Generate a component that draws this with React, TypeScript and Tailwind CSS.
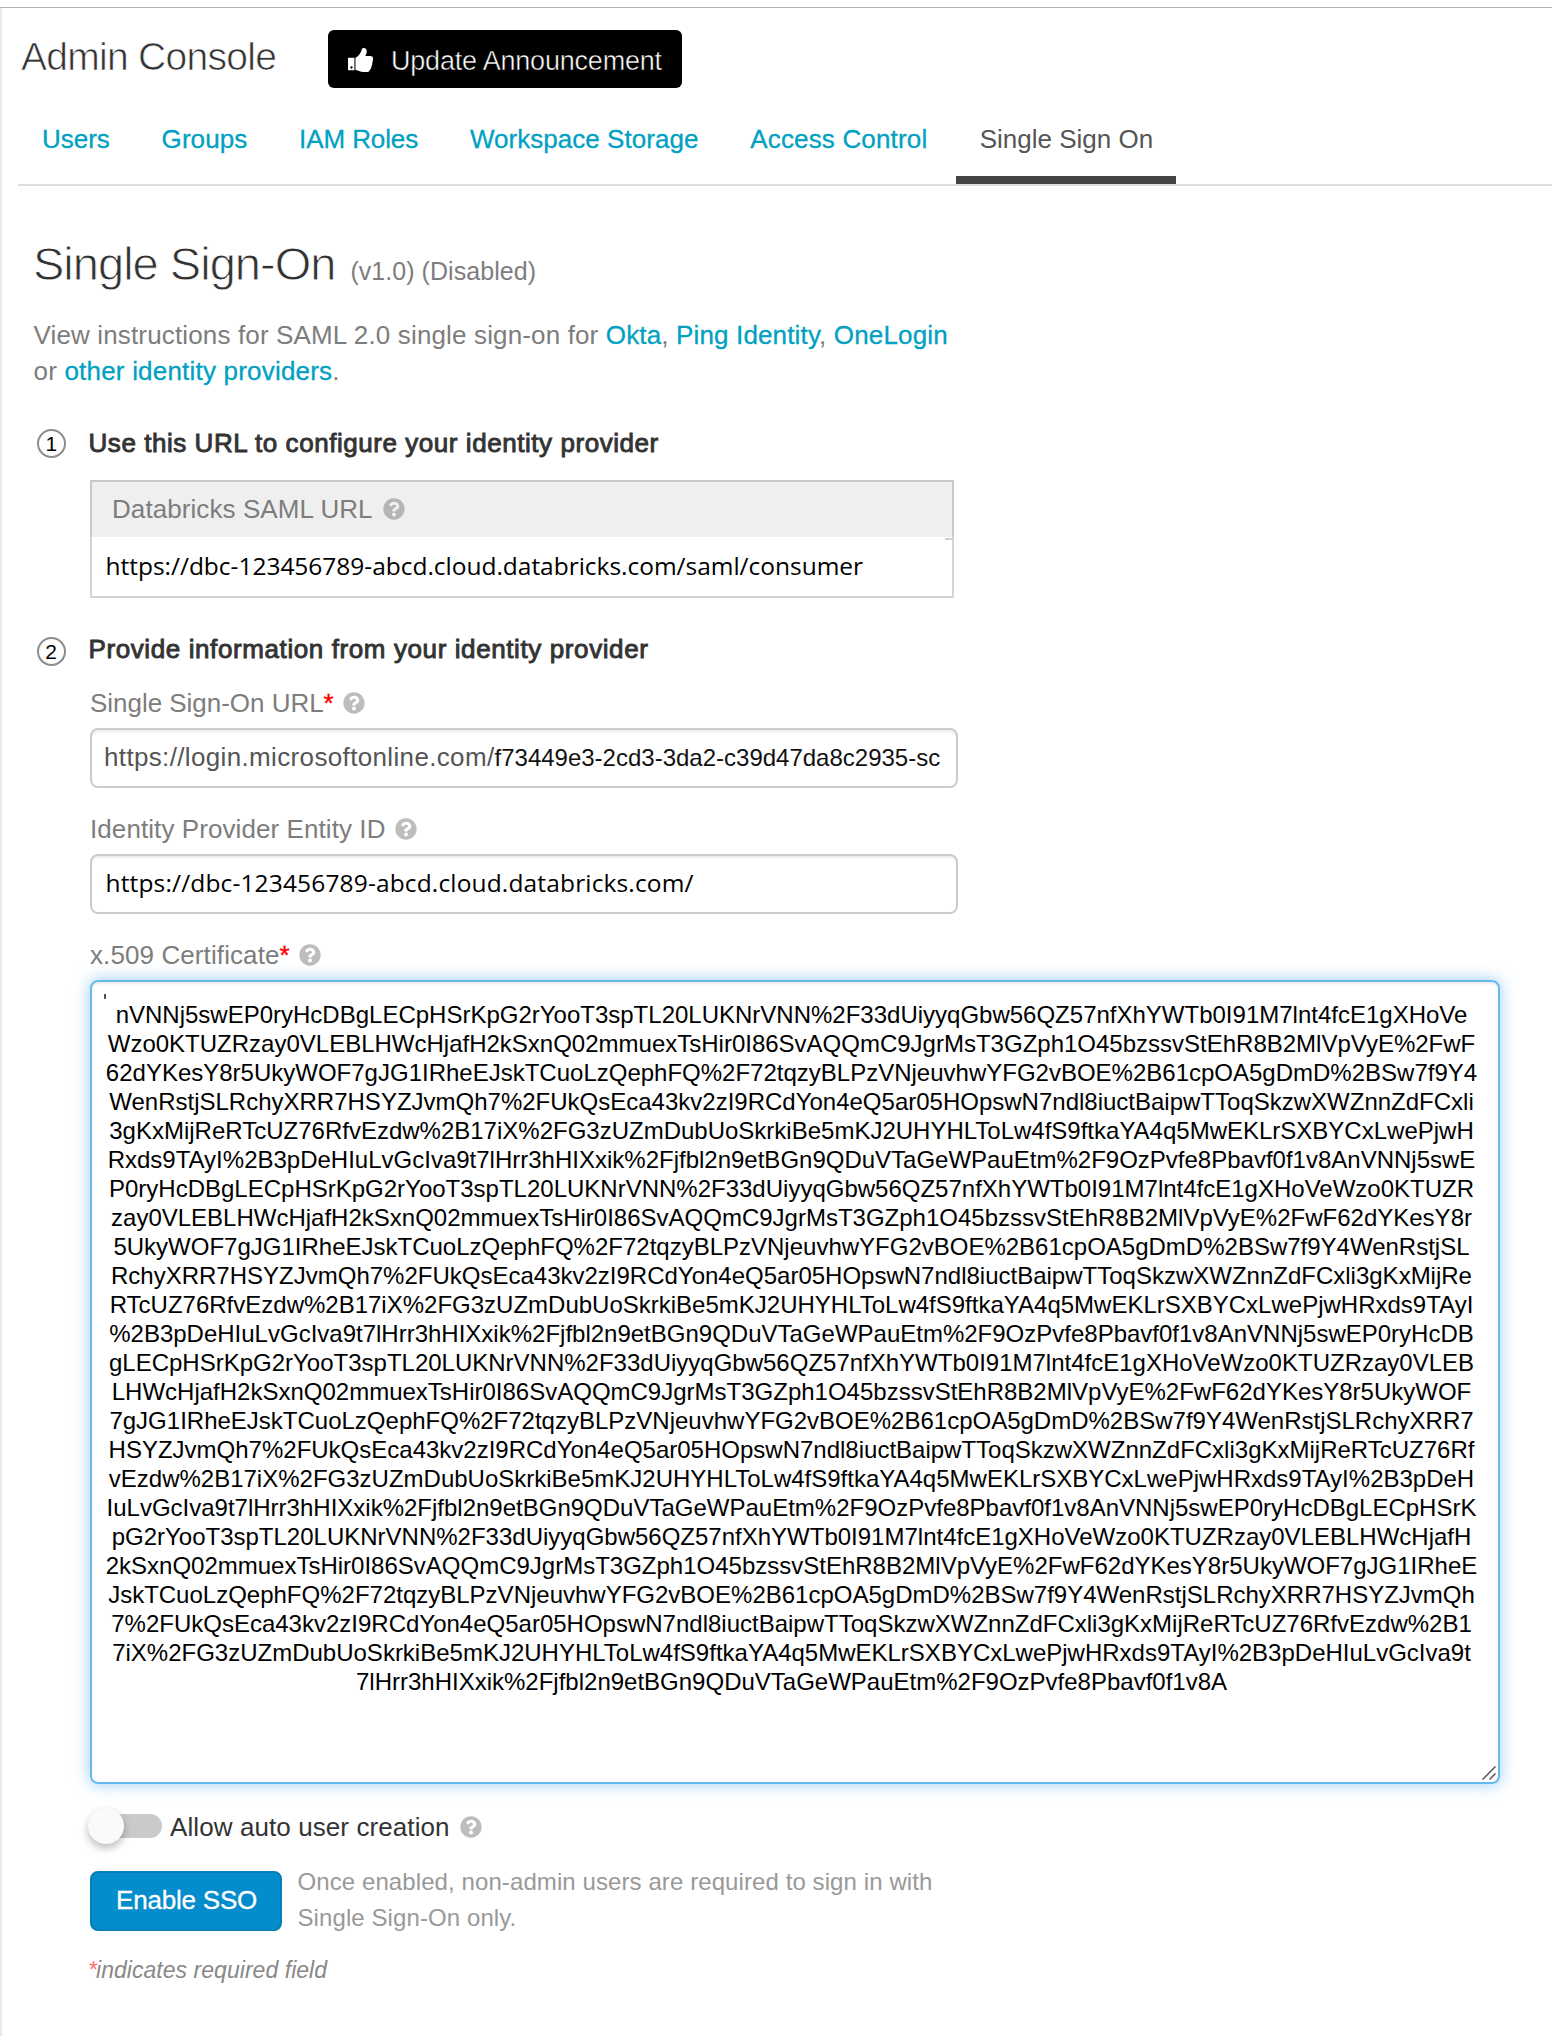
import React from 'react';
import { FaQuestionCircle } from 'react-icons/fa';

const CERTIFICATE_LINES = [
  'nVNNj5swEP0ryHcDBgLECpHSrKpG2rYooT3spTL20LUKNrVNN%2F33dUiyyqGbw56QZ57nfXhYWTb0I91M7lnt4fcE1gXHoVe',
  'Wzo0KTUZRzay0VLEBLHWcHjafH2kSxnQ02mmuexTsHir0I86SvAQQmC9JgrMsT3GZph1O45bzssvStEhR8B2MlVpVyE%2FwF',
  '62dYKesY8r5UkyWOF7gJG1IRheEJskTCuoLzQephFQ%2F72tqzyBLPzVNjeuvhwYFG2vBOE%2B61cpOA5gDmD%2BSw7f9Y4',
  'WenRstjSLRchyXRR7HSYZJvmQh7%2FUkQsEca43kv2zI9RCdYon4eQ5ar05HOpswN7ndl8iuctBaipwTToqSkzwXWZnnZdFCxli',
  '3gKxMijReRTcUZ76RfvEzdw%2B17iX%2FG3zUZmDubUoSkrkiBe5mKJ2UHYHLToLw4fS9ftkaYA4q5MwEKLrSXBYCxLwePjwH',
  'Rxds9TAyI%2B3pDeHIuLvGcIva9t7lHrr3hHIXxik%2Fjfbl2n9etBGn9QDuVTaGeWPauEtm%2F9OzPvfe8Pbavf0f1v8AnVNNj5swE',
  'P0ryHcDBgLECpHSrKpG2rYooT3spTL20LUKNrVNN%2F33dUiyyqGbw56QZ57nfXhYWTb0I91M7lnt4fcE1gXHoVeWzo0KTUZR',
  'zay0VLEBLHWcHjafH2kSxnQ02mmuexTsHir0I86SvAQQmC9JgrMsT3GZph1O45bzssvStEhR8B2MlVpVyE%2FwF62dYKesY8r',
  '5UkyWOF7gJG1IRheEJskTCuoLzQephFQ%2F72tqzyBLPzVNjeuvhwYFG2vBOE%2B61cpOA5gDmD%2BSw7f9Y4WenRstjSL',
  'RchyXRR7HSYZJvmQh7%2FUkQsEca43kv2zI9RCdYon4eQ5ar05HOpswN7ndl8iuctBaipwTToqSkzwXWZnnZdFCxli3gKxMijRe',
  'RTcUZ76RfvEzdw%2B17iX%2FG3zUZmDubUoSkrkiBe5mKJ2UHYHLToLw4fS9ftkaYA4q5MwEKLrSXBYCxLwePjwHRxds9TAyI',
  '%2B3pDeHIuLvGcIva9t7lHrr3hHIXxik%2Fjfbl2n9etBGn9QDuVTaGeWPauEtm%2F9OzPvfe8Pbavf0f1v8AnVNNj5swEP0ryHcDB',
  'gLECpHSrKpG2rYooT3spTL20LUKNrVNN%2F33dUiyyqGbw56QZ57nfXhYWTb0I91M7lnt4fcE1gXHoVeWzo0KTUZRzay0VLEB',
  'LHWcHjafH2kSxnQ02mmuexTsHir0I86SvAQQmC9JgrMsT3GZph1O45bzssvStEhR8B2MlVpVyE%2FwF62dYKesY8r5UkyWOF',
  '7gJG1IRheEJskTCuoLzQephFQ%2F72tqzyBLPzVNjeuvhwYFG2vBOE%2B61cpOA5gDmD%2BSw7f9Y4WenRstjSLRchyXRR7',
  'HSYZJvmQh7%2FUkQsEca43kv2zI9RCdYon4eQ5ar05HOpswN7ndl8iuctBaipwTToqSkzwXWZnnZdFCxli3gKxMijReRTcUZ76Rf',
  'vEzdw%2B17iX%2FG3zUZmDubUoSkrkiBe5mKJ2UHYHLToLw4fS9ftkaYA4q5MwEKLrSXBYCxLwePjwHRxds9TAyI%2B3pDeH',
  'IuLvGcIva9t7lHrr3hHIXxik%2Fjfbl2n9etBGn9QDuVTaGeWPauEtm%2F9OzPvfe8Pbavf0f1v8AnVNNj5swEP0ryHcDBgLECpHSrK',
  'pG2rYooT3spTL20LUKNrVNN%2F33dUiyyqGbw56QZ57nfXhYWTb0I91M7lnt4fcE1gXHoVeWzo0KTUZRzay0VLEBLHWcHjafH',
  '2kSxnQ02mmuexTsHir0I86SvAQQmC9JgrMsT3GZph1O45bzssvStEhR8B2MlVpVyE%2FwF62dYKesY8r5UkyWOF7gJG1IRheE',
  'JskTCuoLzQephFQ%2F72tqzyBLPzVNjeuvhwYFG2vBOE%2B61cpOA5gDmD%2BSw7f9Y4WenRstjSLRchyXRR7HSYZJvmQh',
  '7%2FUkQsEca43kv2zI9RCdYon4eQ5ar05HOpswN7ndl8iuctBaipwTToqSkzwXWZnnZdFCxli3gKxMijReRTcUZ76RfvEzdw%2B1',
  '7iX%2FG3zUZmDubUoSkrkiBe5mKJ2UHYHLToLw4fS9ftkaYA4q5MwEKLrSXBYCxLwePjwHRxds9TAyI%2B3pDeHIuLvGcIva9t',
  '7lHrr3hHIXxik%2Fjfbl2n9etBGn9QDuVTaGeWPauEtm%2F9OzPvfe8Pbavf0f1v8A',
];

const TABS = [
  { label: 'Users' },
  { label: 'Groups', spacing: 'tracking-[0.08px]' },
  { label: 'IAM Roles', spacing: 'tracking-[-0.1px]' },
  { label: 'Workspace Storage', spacing: 'tracking-[0.04px]' },
  { label: 'Access Control', spacing: 'tracking-[0.16px]' },
  { label: 'Single Sign On', active: true },
];

function ThumbsUp() {
  return (
    <svg className="mt-[18px] h-6 w-[25px] shrink-0" viewBox="0 0 75 72">
      <path
        d="M2 29H19V67H2C1 67 0 66 0 65V31C0 30 1 29 2 29ZM10.5 55A3.5 3.5 0 1 0 10.5 62 3.5 3.5 0 1 0 10.5 55Z"
        fill="#fff"
        fillRule="evenodd"
      />
      <path d="M19 29H23V66H19Z" fill="#777" />
      <path
        d="M23 29C30 26 37 17 40 9C41 4 42 0 47 0C54 0 57 5 56 12C56 16 54 20 52 24H67C73 24 76 28 75 33C74 38 74 42 73 46C73 50 72 53 70 56C70 60 68 63 66 65C64 71 60 72 54 72H46C38 72 32 68 23 66Z"
        fill="#fff"
      />
    </svg>
  );
}

function Help({ className = '' }: { className?: string }) {
  return <FaQuestionCircle className={`size-[22px] shrink-0 text-[#bdbdbd] ${className}`} />;
}

function Link({ children }: { children: React.ReactNode }) {
  return (
    <a className="text-[#00a1c2] [-webkit-text-stroke:0.3px_#00a1c2]" href="#">
      {children}
    </a>
  );
}

function Step({ n, title, leading }: { n: number; title: string; leading: string }) {
  return (
    <div className="ml-[5px] flex h-[29px] items-start gap-[22.5px]">
      <span className="flex size-[29px] shrink-0 items-center justify-center rounded-full border-2 border-[#8c8c8c] text-[21px] leading-none text-black">
        {n}
      </span>
      <h3
        className={`text-[26px] font-normal whitespace-nowrap text-[#333] [-webkit-text-stroke:0.9px_#333] ${leading}`}
      >
        {title}
      </h3>
    </div>
  );
}

function Label({ text, required, spacing = '' }: { text: string; required?: boolean; spacing?: string }) {
  return (
    <label className="flex h-9 items-center text-[26px] leading-9 text-[#7d7d7d]">
      <span className={`whitespace-nowrap ${spacing}`}>{text}</span>
      {required && <span className="text-[#f00] [-webkit-text-stroke:0.4px_#f00]">*</span>}
      <Help className="ml-[9px]" />
    </label>
  );
}

const INPUT =
  'mt-[7px] flex h-[60px] w-[868px] items-baseline overflow-hidden rounded-lg border-2 border-[#ccc] whitespace-nowrap shadow-[inset_0_2px_2px_rgba(0,0,0,0.075)]';

export default function App() {
  return (
    <div className="h-[2036px] w-full overflow-hidden bg-white pt-[7px] font-['Liberation_Sans',Arial,sans-serif]">
      <div className="h-[2029px] border-t border-t-[#b0b0b0]">
        <div className="h-full border-l-2 border-l-[#e8e8e8]">
          <header className="flex items-start pt-[22px] pl-[19px]">
            <h1 className="w-[307px] text-[39px] leading-[53px] font-normal tracking-[-0.72px] text-[#333] [-webkit-text-stroke:0.7px_white]">
              Admin Console
            </h1>
            <button className="flex h-[58px] w-[354px] items-start rounded-md bg-black pl-5 text-white">
              <ThumbsUp />
              <span className="ml-[18px] text-[27px] leading-[62px] tracking-[-0.2px] whitespace-nowrap [-webkit-text-stroke:0.5px_black]">
                Update Announcement
              </span>
            </button>
          </header>

          <nav className="ml-4 flex border-b-2 border-[#ddd]">
            <div className="flex gap-1">
              {TABS.map((t) => (
                <a
                  key={t.label}
                  href="#"
                  className={`block h-24 text-[26px] leading-[102px] whitespace-nowrap ${t.spacing ?? ''} ${
                    t.active
                      ? 'ml-px border-b-8 border-[#444] pr-[23px] pl-[23.5px] text-[#555]'
                      : 'px-[23.9px] text-[#00a1c2] [-webkit-text-stroke:0.3px_#00a1c2]'
                  }`}
                >
                  {t.label}
                </a>
              ))}
            </div>
          </nav>

          <main className="pt-12 pl-[30px]">
            <div className="ml-px flex h-[60px] items-baseline leading-[60px]">
              <h2 className="text-[47px] font-normal tracking-[-0.98px] whitespace-nowrap text-[#333] [-webkit-text-stroke:0.9px_white]">
                Single Sign-On
              </h2>
              <span className="ml-[15px] text-[25px] tracking-[0.05px] whitespace-nowrap text-[#7d7d7d]">
                (v1.0) (Disabled)
              </span>
            </div>

            <p className="mt-[23px] ml-[1.5px] text-[26px] leading-9 tracking-[0.145px] whitespace-nowrap text-[#7d7d7d]">
              View instructions for SAML 2.0 single sign-on for <Link>Okta</Link>, <Link>Ping Identity</Link>,{' '}
              <Link>OneLogin</Link>
              <br />
              <span className="tracking-[0.2px]">
                or <Link>other identity providers</Link>.
              </span>
            </p>

            <section className="mt-10 tracking-[0.55px]">
              <Step n={1} title="Use this URL to configure your identity provider" leading="leading-[28px]" />
              <div className="relative mt-[22px] ml-[58px] w-[864px]">
                <div className="flex h-[57px] items-start border-x-2 border-t-2 border-[#c8c8c8] bg-[#efefef] pl-[20px]">
                  <span className="text-[26px] leading-[54px] tracking-[0.08px] whitespace-nowrap text-[#7d7d7d]">
                    Databricks SAML URL
                  </span>
                  <Help className="mt-[15.5px] ml-[10px] !text-[#b5b5b5]" />
                </div>
                <div className="h-[61px] border-x-2 border-b-2 border-[#d5d5d5] pl-[13.5px] font-['Open_Sans',sans-serif] text-[24.5px] leading-[57px] tracking-[-0.02px] whitespace-nowrap text-black">
                  https://dbc-123456789-abcd.cloud.databricks.com/saml/consumer
                </div>
                <span className="absolute top-[58px] right-0 h-[2px] w-[9px] bg-[#d0d0d0]" />
              </div>
            </section>

            <section className="mt-[39px]">
              <div className="tracking-[0.6px]">
                <Step n={2} title="Provide information from your identity provider" leading="leading-[24px]" />
              </div>
              <div className="ml-[58px]">
                <div className="mt-[19px]">
                  <Label text="Single Sign-On URL" required spacing="tracking-[-0.03px]" />
                  <div className={`${INPUT} pl-3 leading-[54px]`}>
                    <span className="text-[26px] tracking-[0.35px] text-[#555]">https://login.microsoftonline.com/</span>
                    <span className="text-[24px] text-[#111]">f73449e3-2cd3-3da2-c39d47da8c2935-sc</span>
                  </div>
                </div>

                <div className="mt-[23px]">
                  <Label text="Identity Provider Entity ID" spacing="tracking-[0.08px]" />
                  <div
                    className={`${INPUT} pl-[13.5px] font-['Open_Sans',sans-serif] text-[24.5px] leading-[54px] tracking-[0.15px] text-black`}
                  >
                    https://dbc-123456789-abcd.cloud.databricks.com/
                  </div>
                </div>

                <div className="mt-[23px]">
                  <Label text="x.509 Certificate" required spacing="tracking-[0.1px]" />
                  <div className="relative mt-[7px] h-[804px] w-[1410px] rounded-lg border-2 border-[#66b9ec] pt-[18px] pr-[7px] text-center text-[24px] leading-[29px] text-black shadow-[inset_0_2px_2px_rgba(0,0,0,0.075),0_0_16px_rgba(82,168,236,0.6)]">
                    <span className="absolute top-3 left-3 h-[5px] w-[2px] bg-[#555]" />
                    {CERTIFICATE_LINES.map((line, i) => (
                      <div key={i} className="whitespace-nowrap">
                        {line}
                      </div>
                    ))}
                    <svg className="absolute right-[2px] bottom-[2px] size-[14px]" viewBox="0 0 14 14" fill="none">
                      <path d="M0.5 13.5 13.5 0.5M7.5 13.5 13.5 7.5" stroke="#555" strokeWidth="1.5" />
                    </svg>
                  </div>
                </div>

                <div className="mt-6 flex h-9 items-start">
                  <div className="relative -ml-[2px] h-9 w-[74px] pt-[6px] pl-[6px]">
                    <div className="h-6 w-[68px] rounded-full bg-[#cacaca]" />
                    <span className="absolute top-0 left-0 size-9 rounded-full bg-[#fafafa] shadow-[0_4px_8px_rgba(0,0,0,0.28)]" />
                  </div>
                  <span className="ml-2 text-[26px] leading-[38px] tracking-[0.09px] whitespace-nowrap text-[#333]">
                    Allow auto user creation
                  </span>
                  <Help className="mt-[7.5px] ml-[10px]" />
                </div>

                <div className="mt-[27px] flex h-[60px] items-start">
                  <button className="flex h-[60px] w-[192px] items-start rounded-lg border-2 border-[#047fb8] bg-[#048dcd] pl-[24px] text-[26px] leading-[54px] tracking-[-0.2px] whitespace-nowrap text-white [-webkit-text-stroke:0.3px_white]">
                    Enable SSO
                  </button>
                  <p className="-mt-[7px] ml-[15.5px] text-[24px] leading-9 tracking-[0.09px] whitespace-nowrap text-[#999]">
                    Once enabled, non-admin users are required to sign in with
                    <br />
                    Single Sign-On only.
                  </p>
                </div>

                <p className="mt-6 -ml-[2px] text-[23px] leading-[30px] tracking-[0.04px] whitespace-nowrap text-[#888] italic">
                  <span className="text-[#ff7070]">*</span>
                  <span className="-ml-px">indicates required field</span>
                </p>
              </div>
            </section>
          </main>
        </div>
      </div>
    </div>
  );
}
